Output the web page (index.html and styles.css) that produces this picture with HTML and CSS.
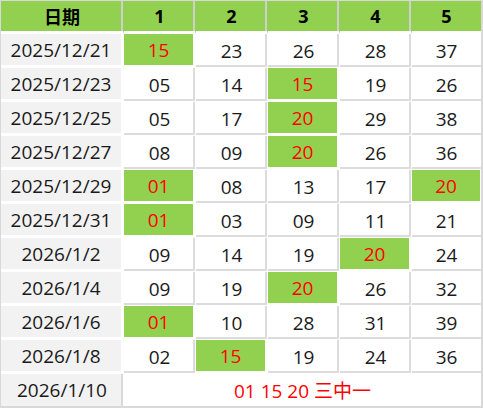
FILE: index.html
```html
<!DOCTYPE html>
<html lang="zh">
<head>
<meta charset="utf-8">
<title>开奖记录</title>
<link rel="stylesheet" href="styles.css">
</head>
<body>
<div class="board">
  <div class="hd">日期</div><div class="hd">1</div><div class="hd">2</div><div class="hd">3</div><div class="hd">4</div><div class="hd last">5</div>

  <div class="date">2025/12/21</div><div class="num hit">15</div><div class="num">23</div><div class="num">26</div><div class="num">28</div><div class="num last">37</div>
  <div class="date">2025/12/23</div><div class="num">05</div><div class="num">14</div><div class="num hit">15</div><div class="num">19</div><div class="num last">26</div>
  <div class="date">2025/12/25</div><div class="num">05</div><div class="num">17</div><div class="num hit">20</div><div class="num">29</div><div class="num last">38</div>
  <div class="date">2025/12/27</div><div class="num">08</div><div class="num">09</div><div class="num hit">20</div><div class="num">26</div><div class="num last">36</div>
  <div class="date">2025/12/29</div><div class="num hit">01</div><div class="num">08</div><div class="num">13</div><div class="num">17</div><div class="num last hit">20</div>
  <div class="date">2025/12/31</div><div class="num hit">01</div><div class="num">03</div><div class="num">09</div><div class="num">11</div><div class="num last">21</div>
  <div class="date">2026/1/2</div><div class="num">09</div><div class="num">14</div><div class="num">19</div><div class="num hit">20</div><div class="num last">24</div>
  <div class="date">2026/1/4</div><div class="num">09</div><div class="num">19</div><div class="num hit">20</div><div class="num">26</div><div class="num last">32</div>
  <div class="date">2026/1/6</div><div class="num hit">01</div><div class="num">10</div><div class="num">28</div><div class="num">31</div><div class="num last">39</div>
  <div class="date">2026/1/8</div><div class="num">02</div><div class="num hit">15</div><div class="num">19</div><div class="num">24</div><div class="num last">36</div>

  <div class="date foot">2026/1/10</div><div class="result">01 15 20 三中一</div>
</div>
</body>
</html>
```

FILE: styles.css
```css
html, body {
  margin: 0;
  padding: 0;
  background: #ffffff;
}

.board {
  display: grid;
  grid-template-columns: 123px repeat(4, 72px) 69px;
  grid-template-rows: 33px repeat(10, 34px) 32px;
  width: 483px;
  height: 408px;
  box-sizing: border-box;
  border-style: solid;
  border-color: #d9d9d9;
  border-width: 1px 2px 2px 1px;
  font-family: "Open Sans", "Noto Sans CJK SC", sans-serif;
  font-size: 19px;
  color: #1a1a1a;
  background: #ffffff;
}

.board > div {
  box-sizing: border-box;
  display: flex;
  align-items: center;
  justify-content: center;
}

.hd {
  background: #92d050;
  border-bottom: 3px solid #ffffff;
  border-right: 1px solid #92d050;
  box-shadow: inset -2px 0 0 #cfcfcf;
  font-weight: 700;
  color: #000000;
  font-size: 18px;
}

.hd.last {
  border-right: 0;
  box-shadow: none;
}

.date {
  background: #f2f2f2;
  border-right: 3px solid #ffffff;
  border-bottom: 3px solid #ffffff;
}

.date.foot {
  border-bottom: 0;
  border-right: 1px solid #ffffff;
  box-shadow: inset -2px 0 0 #d9d9d9;
}

.num {
  background: #ffffff;
  border-right: 1px solid #ffffff;
  border-bottom: 1px solid #ffffff;
  box-shadow: inset -2px -2px 0 #dcdcdc;
}

.num.last {
  border-right: 0;
  box-shadow: inset 0 -2px 0 #dcdcdc;
}

.num.hit {
  background: #92d050;
  color: #ff0000;
  border-right: 3px solid #ffffff;
  border-bottom: 3px solid #ffffff;
  box-shadow: none;
}

.num.last.hit {
  border-right: 1px solid #ffffff;
}

.result {
  grid-column: span 5;
  background: #ffffff;
  color: #ff0000;
}
```
